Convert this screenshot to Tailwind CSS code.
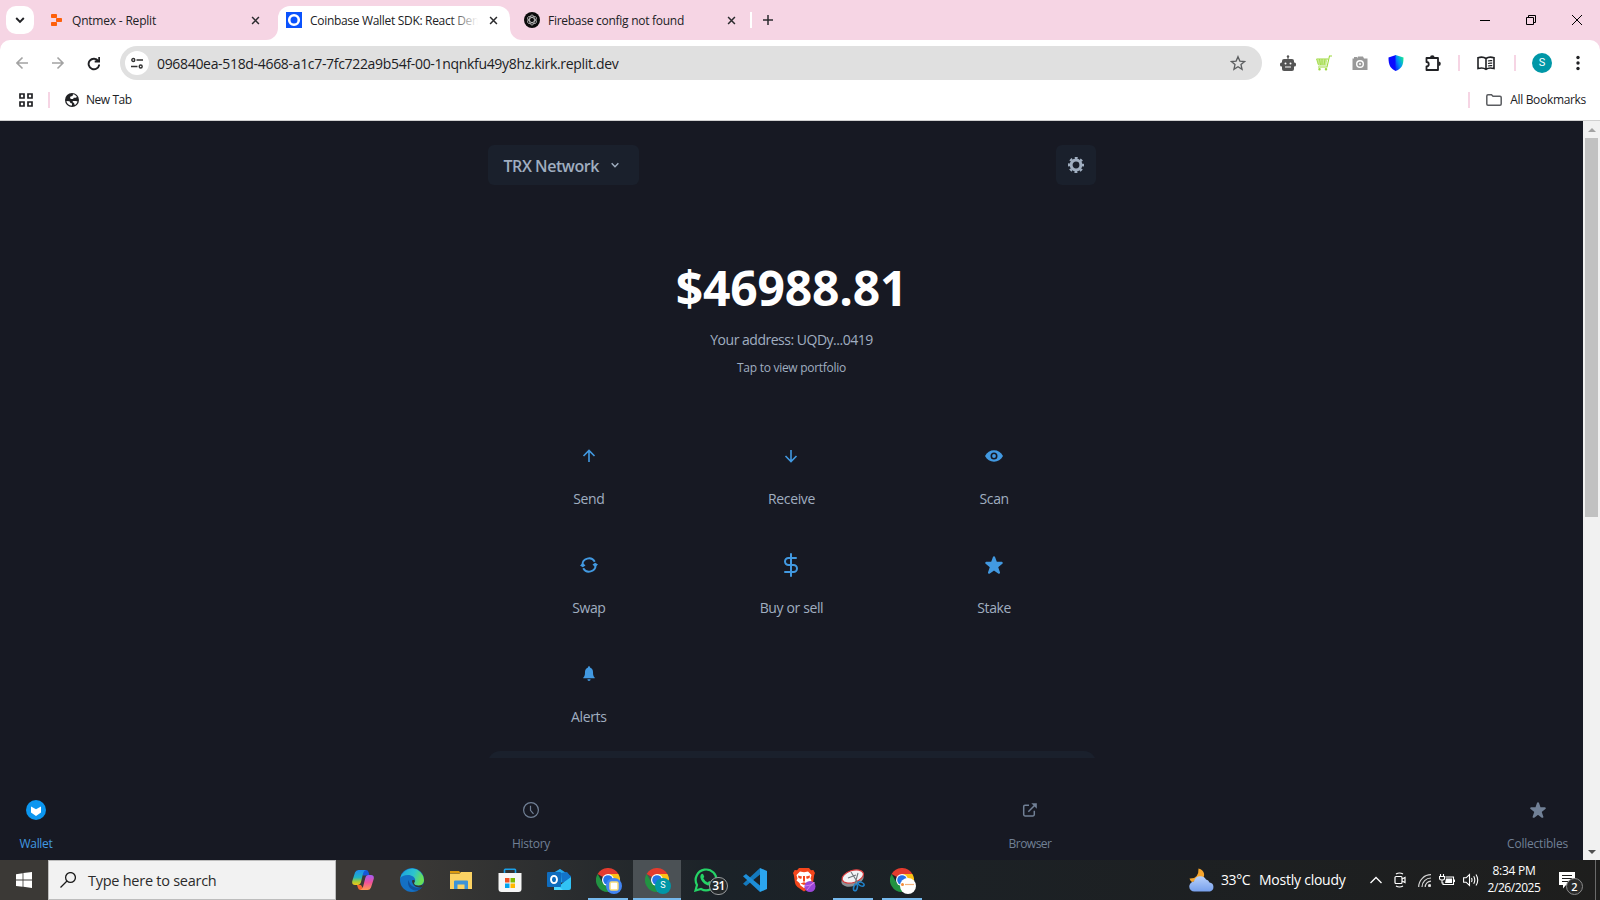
<!DOCTYPE html>
<html lang="en">
<head>
<meta charset="utf-8">
<title>Coinbase Wallet SDK: React Demo</title>
<script src="https://cdn.jsdelivr.net/npm/@tailwindcss/browser@4"></script>
</head>
<body class="h-[900px] w-[1600px] overflow-hidden bg-white font-['Open_Sans','Noto_Sans',sans-serif] text-[#202124]">
<svg class="hidden">
  <defs>
    <symbol id="close" viewBox="0 0 10 10"><path d="M1.2 1.2l7.6 7.6M8.8 1.2L1.2 8.8" stroke="#2b2b2e" stroke-width="1.7" fill="none"/></symbol>
    <symbol id="star" viewBox="0 0 24 24"><path fill="currentColor" d="M23.555 8.729a1.505 1.505 0 0 0-1.406-.98h-6.087a.5.5 0 0 1-.472-.334l-2.185-6.193a1.5 1.5 0 0 0-2.81 0l-.005.016-2.18 6.177a.5.5 0 0 1-.471.334H1.85A1.5 1.5 0 0 0 .887 10.4l5.184 4.3a.5.5 0 0 1 .155.543l-2.178 6.531a1.5 1.5 0 0 0 2.31 1.684l5.346-3.92a.5.5 0 0 1 .591 0l5.344 3.919a1.5 1.5 0 0 0 2.312-1.683l-2.178-6.535a.5.5 0 0 1 .155-.543l5.194-4.306a1.5 1.5 0 0 0 .433-1.661z"/></symbol>
    <symbol id="chrome" viewBox="0 0 24 24">
      <path fill="#e33b2e" d="M12 12L1.6 6A12 12 0 0 1 22.4 6z"/><path fill="#fbc116" d="M12 12V6h10.4A12 12 0 0 1 12 24l5.2-9z"/><path fill="#229342" d="M12 12l5.2 3L12 24A12 12 0 0 1 1.6 6l5.2 9z"/>
      <circle cx="12" cy="12" r="6" fill="#fff"/><circle cx="12" cy="12" r="4.8" fill="#2373e8"/>
    </symbol>
  </defs>
</svg>

<!-- Tab strip -->
<header class="flex h-10 bg-[#f6d5e4]">
  <div class="flex w-10 shrink-0 items-center pl-1.5">
    <div class="flex size-7 items-center justify-center rounded-[10px] bg-white">
      <svg class="size-2.5" viewBox="0 0 10 10"><path d="M1.2 3l3.8 3.8L8.8 3" fill="none" stroke="#202124" stroke-width="1.9"/></svg>
    </div>
  </div>
  <div class="flex w-[238px] shrink-0 items-center bg-white">
    <div class="flex h-10 w-[238px] items-center rounded-br-xl bg-[#f6d5e4] pr-[18px] pl-[11px]">
      <svg class="size-3 shrink-0" viewBox="0 0 12 12" fill="#fd5f0a"><rect x="0" y="0" width="6" height="4" rx=".8"/><rect x="5" y="4" width="6" height="4" rx=".8"/><rect x="0" y="8" width="6" height="4" rx=".8"/></svg>
      <span class="ml-[9px] flex-1 pt-0.5 text-xs tracking-[-0.2px] whitespace-nowrap">Qntmex - Replit</span>
      <svg class="size-[9px]"><use href="#close"/></svg>
    </div>
  </div>
  <div class="flex w-[232px] shrink-0 pt-1.5">
    <div class="flex h-[34px] w-full items-center rounded-t-xl bg-white pr-[12px] pb-[6px] pl-2">
      <svg class="size-4 shrink-0" viewBox="0 0 16 16"><path fill="#0a52fd" d="M0 0h16v16H0z"/><circle cx="8" cy="8" r="4.8" fill="none" stroke="#fff" stroke-width="2.6"/><rect x="6.5" y="6.5" width="3" height="3" rx=".5" fill="#0a52fd"/></svg>
      <div class="relative ml-2 w-[168px] overflow-hidden pt-0.5 text-xs tracking-[-0.31px] whitespace-nowrap">Coinbase Wallet SDK: React Demo
        <div class="absolute inset-y-0 right-0 w-7 bg-linear-to-r from-white/0 to-white"></div>
      </div>
      <svg class="ml-auto size-[9px]"><use href="#close"/></svg>
    </div>
  </div>
  <div class="flex flex-1 bg-white">
    <div class="flex flex-1 items-center rounded-bl-xl bg-[#f6d5e4] pl-[14px]">
      <svg class="size-4 shrink-0" viewBox="0 0 16 16"><circle cx="8" cy="8" r="8" fill="#0b0b0b"/><g fill="none" stroke="#c9c9c9" stroke-width=".8"><ellipse cx="8" cy="8" rx="2.4" ry="5"/><ellipse cx="8" cy="8" rx="2.4" ry="5" transform="rotate(60 8 8)"/><ellipse cx="8" cy="8" rx="2.4" ry="5" transform="rotate(120 8 8)"/></g></svg>
      <span class="ml-2 w-[179px] pt-0.5 text-xs tracking-[-0.27px] whitespace-nowrap">Firebase config not found</span>
      <svg class="size-[9px]"><use href="#close"/></svg>
      <i class="ml-[14px] h-4 w-0.5 bg-white"></i>
      <svg class="ml-[11px] size-[10px]" viewBox="0 0 10 10"><path d="M5 0v10M0 5h10" stroke="#2b2b2e" stroke-width="1.5"/></svg>
      <svg class="ml-auto h-2.5 w-[102px] mr-[18px]" viewBox="0 0 102 10" fill="none" stroke="#000" stroke-width="1"><path d="M0 5.5h10M46.500 2.500h7v7h-7zM48.500 2.500v-2h7v7h-2M92 0l10 10M102 0l-10 10"/></svg>
    </div>
  </div>
</header>

<!-- Address bar -->
<div class="bg-[#f6d5e4]">
<div class="flex h-[41px] items-center rounded-t-[10px] bg-white pt-[5px]">
  <svg class="ml-4 h-4 w-[84px] shrink-0" viewBox="0 0 84 16" fill="none" stroke-width="1.6"><path stroke="#a3a3a3" d="M12 8H1M6.500 2.500L1 8l5.500 5.500M36 8h11M41.500 2.500L47 8l-5.500 5.500"/><path stroke="#202124" stroke-width="1.9" d="M82.300 6A5.300 5.300 0 1 0 83.200 9.500M83.200 2v4.500h-4.500"/></svg>
  <div class="ml-5 flex h-[34px] w-[1142px] shrink-0 items-center rounded-full bg-[#e0e0e0] pl-[5px]">
    <div class="flex size-6 items-center justify-center rounded-full bg-white">
      <svg class="size-3" viewBox="0 0 12 12" fill="none" stroke="#333" stroke-width="1.4"><circle cx="2.300" cy="3" r="1.500"/><path d="M5.500 3H12M0 9.500h6.500"/><circle cx="9.700" cy="9.500" r="1.500"/></svg>
    </div>
    <span class="ml-2 pt-px text-sm tracking-[-0.32px] whitespace-nowrap">096840ea-518d-4668-a1c7-7fc722a9b54f-00-1nqnkfu49y8hz.kirk.replit.dev</span>
    <svg class="mr-4 ml-auto size-4" viewBox="0 0 24 24"><path d="M12 2.500l2.800 6.600 7.100.6-5.400 4.700 1.600 7L12 17.700l-6.100 3.700 1.600-7-5.400-4.700 7.100-.6z" fill="none" stroke="#5c5e60" stroke-width="2"/></svg>
  </div>
  <svg class="ml-[18px] size-4 shrink-0" viewBox="0 0 16 16" fill="#555"><circle cx="8" cy="1.500" r="1.200"/><path d="M7.500 2h1v3h-1z"/><rect x="2" y="4" width="12" height="12" rx="2"/><rect y="7.500" width="16" height="4" rx="1.500"/><g fill="#fff"><circle cx="5.500" cy="8.500" r="1"/><circle cx="10.500" cy="8.500" r="1"/><path d="M5 11.500h6v1H5z"/></g></svg>
  <svg class="ml-5 size-4 shrink-0" viewBox="0 0 16 16" fill="none" stroke="#9bd83b" stroke-width="1.100"><path fill="#e6f7c8" stroke="none" d="M.5 4h11L10.500 10H2.500z"/><path d="M16 1h-2.500L11 12H2M.5 4h11.500"/><path stroke-width=".8" d="M.5 4l2 6M3.500 4l1 6M6 4v6M9 4l-1 6M1 6h10M1.500 8h9M2.500 10h8"/><circle cx="3.500" cy="14.300" r=".7"/><circle cx="10" cy="14.300" r=".7"/></svg>
  <svg class="ml-5 size-4 shrink-0" viewBox="0 0 16 16"><path fill="#999" d="M1 3.500h1V2h3v1.500L6 1.500h5l1 2h3.500v11.500h-15V3.500z"/><circle cx="8" cy="9" r="3.300" fill="none" stroke="#fff" stroke-width="1.400"/><circle cx="8" cy="9" r="1" fill="#fff"/></svg>
  <svg class="ml-5 size-4 shrink-0" viewBox="0 0 16 16"><defs><linearGradient id="sh" x1="0" y1="0.900" x2="1" y2="0.100"><stop stop-color="#0a22ff"/><stop offset=".45" stop-color="#0090f5"/><stop offset="1" stop-color="#19f58a"/></linearGradient></defs><path fill="#0a0aff" d="M8 0v16C3 14 .5 11 .5 2.500z"/><path fill="url(#sh)" d="M7.500 0v16C13 14 15.500 11 15.500 2.500z"/></svg>
  <svg class="ml-[21px] size-4 shrink-0" viewBox="0 0 16 16"><path d="M1.500 3h11.500v12H1.500v-3.500c3 0 3-4.500 0-4.500z" fill="none" stroke="#202124" stroke-width="1.800" stroke-linejoin="round"/><path fill="#202124" d="M5 2.500a2.300 2.300 0 0 1 4.600 0zM13.500 6.500a2.300 2.300 0 0 1 0 4.600z"/></svg>
  <i class="ml-[17px] h-4 w-0.5 shrink-0 bg-[#f6d5e4]"></i>
  <svg class="ml-[17px] h-4 w-[18px] shrink-0" viewBox="0 0 18 16" fill="none" stroke="#202124" stroke-width="1.600"><path d="M9 3.500C7 2 3.500 2 1 2.700v10.800c2.500-.7 6-.7 8 .8 2-1.500 5.500-1.500 8-.8V2.700c-2.500-.7-6-.7-8 .8zM9 3.500v10.800"/><path stroke-width="1.200" d="M11 6c1.300-.5 2.700-.5 4.200-.3M11 8.500c1.300-.5 2.700-.5 4.200-.3M11 11c1.300-.5 2.700-.5 4.200-.3"/></svg>
  <i class="ml-[19px] h-4 w-0.5 shrink-0 bg-[#f6d5e4]"></i>
  <div class="ml-4 flex size-5 shrink-0 items-center justify-center rounded-full bg-[#0097a7] font-['Roboto',sans-serif] text-[11px] text-white">S</div>
  <svg class="ml-6 h-4 w-1 shrink-0" viewBox="0 0 4 16" fill="#202124"><circle cx="2" cy="2.500" r="1.700"/><circle cx="2" cy="8" r="1.700"/><circle cx="2" cy="13.500" r="1.700"/></svg>
</div>
</div>

<!-- Bookmarks bar -->
<div class="flex h-10 items-center border-b border-[#d0d0d0] bg-white pr-[14px] pb-px text-xs">
  <svg class="ml-[19px] size-[14px]" viewBox="0 0 14 14" fill="none" stroke="#202124" stroke-width="1.700"><path d="M1 1h4v4H1zM9 1h4v4H9zM1 9h4v4H1zM9 9h4v4H9z"/></svg>
  <i class="ml-[15px] h-4 w-0.5 bg-[#f6d5e4]"></i>
  <svg class="ml-[15px] size-[14px]" viewBox="0 0 14 14"><circle cx="7" cy="7" r="7" fill="#202124"/><path fill="#fff" d="M1.500 8l3 .2 1 1.800 1.500.5V12.600C4 12.600 1.600 10.600 1.500 8zM8 1.300c2 .3 3 1.200 4 2.700l-2 1-1-.5-1 1.500H6l-1-1 .5-1.500L7.500 3zM8 8h3l1.500.5c-.3 1.500-1.300 2.800-2.800 3.600L9 10 7.500 9z"/></svg>
  <span class="ml-[7px] tracking-[-0.45px]">New Tab</span>
  <i class="ml-auto h-4 w-0.5 bg-[#f6d5e4]"></i>
  <svg class="ml-4 h-3 w-4" viewBox="0 0 16 12"><path d="M.8 10V2Q.8.800 2 .800h3.500L7 2.300h7q1.200 0 1.200 1.200V10q0 1.200-1.200 1.200H2Q.8 11.200.8 10z" fill="none" stroke="#5a5c60" stroke-width="1.500"/></svg>
  <span class="ml-2 tracking-[-0.32px]">All Bookmarks</span>
</div>

<!-- Page viewport -->
<div class="flex h-[739px]">
  <div class="flex w-[1583px] flex-col bg-[#171923] text-[#a0aec0]">
    <main class="mx-auto flex h-[637px] w-[608px] flex-col overflow-hidden pt-6">
      <div class="flex items-center justify-between">
        <div class="flex h-10 w-[151px] items-center rounded-md bg-[#1a202c] pl-4">
          <span class="w-[96px] pt-px text-base font-semibold tracking-[-0.44px] whitespace-nowrap">TRX Network</span>
          <svg class="ml-[7px] size-4" viewBox="0 0 24 24"><path d="M7 9.500l5 5 5-5" fill="none" stroke="currentColor" stroke-width="2.200"/></svg>
        </div>
        <div class="flex size-10 items-center justify-center rounded-md bg-[#1a202c]">
          <svg class="size-4" viewBox="0 0 16 16" fill="none" stroke="currentColor"><circle cx="8" cy="8" r="4.900" stroke-width="3"/><circle cx="8" cy="8" r="7" stroke-width="2.200" stroke-dasharray="2.800 2.698" stroke-dashoffset="1.400"/></svg>
        </div>
      </div>
      <div class="mt-[71px] flex flex-col items-center">
        <div class="h-[64px] text-5xl leading-[64px] font-bold tracking-[-0.2px] text-white">$46988.81</div>
        <div class="mt-[9px] text-sm leading-[21px] tracking-[-0.49px]">Your address: UQDy...0419</div>
        <div class="mt-[9px] text-xs leading-[18px] tracking-[-0.28px]">Tap to view portfolio</div>
      </div>
      <div class="mt-[63px] grid h-[307px] shrink-0 grid-cols-3 grid-rows-[109px_109px_89px] text-center text-sm leading-[21px] tracking-[-0.37px]">
        <div class="flex flex-col items-center">
          <svg class="mt-1 h-6 w-6" viewBox="0 0 24 24" fill="none" stroke="#4299e1" stroke-width="1.600"><path d="M12 18V6.500M6.500 12L12 6.500l5.500 5.500"/></svg><span class="mt-5">Send</span>
        </div>
        <div class="flex flex-col items-center">
          <svg class="mt-1 h-6 w-6" viewBox="0 0 24 24" fill="none" stroke="#4299e1" stroke-width="1.600"><path d="M12 6v11.500M6.500 12l5.500 5.500 5.500-5.500"/></svg><span class="mt-5">Receive</span>
        </div>
        <div class="flex flex-col items-center">
          <svg class="mt-1 h-6 w-6" viewBox="0 0 24 24"><path fill="#4299e1" d="M3 12c2-3.800 5.200-5.700 9-5.700s7 1.900 9 5.700c-2 3.800-5.200 5.700-9 5.700S5 15.800 3 12z"/><circle cx="12" cy="12" r="2.700" fill="none" stroke="#171923" stroke-width="1.600"/></svg><span class="mt-5">Scan</span>
        </div>
        <div class="flex flex-col items-center">
          <svg class="mt-1 h-6 w-6" viewBox="0 0 24 24" fill="none" stroke="#4299e1" stroke-width="1.800"><path d="M5.300 12A6.700 6.700 0 0 1 17.800 8.700M18.700 12A6.700 6.700 0 0 1 6.200 15.300"/><path fill="#4299e1" stroke="none" d="M3 12.500l3-2.500 2.500 2.500-2.700 1.800zM21 11.500l-3 2.500-2.500-2.500 2.700-1.800z"/></svg><span class="mt-5">Swap</span>
        </div>
        <div class="flex flex-col items-center">
          <svg class="mt-1 h-6 w-6" viewBox="0 0 24 24" fill="none" stroke="#4299e1" stroke-width="2" stroke-linecap="round" stroke-linejoin="round"><path d="M12 1v22M17 5H9.500a3.500 3.500 0 0 0 0 7h5a3.500 3.500 0 0 1 0 7H6"/></svg><span class="mt-5">Buy or sell</span>
        </div>
        <div class="flex flex-col items-center text-[#a0aec0]">
          <svg class="mt-[7px] mb-[-1px] size-[18px] text-[#4299e1]"><use href="#star"/></svg><span class="mt-6">Stake</span>
        </div>
        <div class="flex flex-col items-center">
          <svg class="mt-1 h-6 w-6" viewBox="0 0 24 24" fill="#4299e1"><path d="M12 4.300c.7 0 1 .4 1 1.100 2 .6 3 2.300 3 4.600 0 3.500.5 4.300 1.700 5.500v.8H6.300v-.8C7.500 14.300 8 13.500 8 10c0-2.300 1-4 3-4.600 0-.7.300-1.100 1-1.100zM10.400 17.300h3.200a1.600 1.600 0 0 1-3.200 0z"/></svg><span class="mt-5">Alerts</span>
        </div>
      </div>
      <div class="mt-auto h-[7px] shrink-0 overflow-hidden"><div class="h-10 rounded-xl bg-[#1a202c]"></div></div>
    </main>
    <nav class="flex flex-1 justify-between pt-[42px] pr-[15px] pl-4 text-xs leading-[18px] text-[#718096]">
      <div class="flex w-10 flex-col items-center text-[#4299e1]">
        <svg class="size-5" viewBox="0 0 20 20"><circle cx="10" cy="10" r="10" fill="#0b96f0"/><path fill="#fff" d="M5 6.500l5 2.700 5-2.700v6L10 16l-5-3.500z"/></svg><span class="mt-[15px] tracking-[-0.3px]">Wallet</span>
      </div>
      <div class="flex w-[44px] flex-col items-center">
        <svg class="my-0.5 size-4" viewBox="0 0 16 16" fill="none" stroke="currentColor" stroke-width="1.200"><circle cx="8" cy="8" r="7.400"/><path d="M7.500 3.800v4.500l3 3.500"/></svg><span class="mt-[15px] tracking-[-0.29px]">History</span>
      </div>
      <div class="flex w-[48px] flex-col items-center">
        <svg class="my-0.5 size-4" viewBox="0 0 16 16" fill="none" stroke="currentColor" stroke-width="1.500"><path d="M7 3.200H3Q1.700 3.200 1.700 4.500v8Q1.700 13.900 3 13.900h8q1.300 0 1.300-1.300V8.700M6.300 9.800L13 3"/><path fill="currentColor" stroke="none" d="M9.300 1.300h5.500v5.500z"/></svg><span class="mt-[15px] tracking-[-0.5px]">Browser</span>
      </div>
      <div class="flex w-[61px] flex-col items-center">
        <svg class="my-0.5 size-4"><use href="#star"/></svg><span class="mt-[15px] tracking-[-0.21px]">Collectibles</span>
      </div>
    </nav>
  </div>
  <div class="flex w-[17px] flex-col items-center bg-[#f1f1f1]">
    <svg class="h-[17px] w-2" viewBox="0 0 8 17"><path fill="#a3a3a3" d="M0 11l4-4 4 4z"/></svg>
    <i class="h-[379px] w-[13px] bg-[#c1c1c1]"></i>
    <svg class="mt-auto h-[17px] w-2" viewBox="0 0 8 17"><path fill="#505050" d="M0 7l4 4 4-4z"/></svg>
  </div>
</div>

<!-- Taskbar -->
<footer class="flex h-10 bg-linear-to-r from-[#3b3936] from-25% via-[#1b2228] via-45% to-[#1e1e1d] to-100% text-white">
  <div class="flex w-12 shrink-0 items-center justify-center">
    <svg class="size-4" viewBox="0 0 16 16" fill="#fff"><path d="M0 2.200L6.600 1.200v6.400H0zM7.400 1.100L16 0v7.600H7.400zM0 8.400h6.600v6.400L0 13.900zM7.400 8.400H16V16l-8.600-1.200z"/></svg>
  </div>
  <div class="flex h-10 w-72 shrink-0 items-center border border-[#bdbdbd] bg-[#f2f2f2] pl-[11px] text-[#2b2b2b]">
    <svg class="size-4" viewBox="0 0 16 16" fill="none" stroke="#1a1a1a" stroke-width="1.300"><circle cx="10.500" cy="5.500" r="4.900"/><path d="M7 9L.5 15.500"/></svg>
    <span class="ml-3 pt-0.5 text-[14.5px] tracking-[-0.26px]">Type here to search</span>
  </div>
  <div class="ml-[3px] flex shrink-0 gap-px">
    <div class="flex w-12 items-center justify-center">
      <svg class="size-[22px]" viewBox="0 0 22 22"><defs><linearGradient id="ca" x2="0" y2="1"><stop stop-color="#1f8cf0"/><stop offset=".5" stop-color="#22b5c0"/><stop offset=".75" stop-color="#9ccb3b"/><stop offset="1" stop-color="#f5c518"/></linearGradient><linearGradient id="cb" x2="0" y2="1"><stop stop-color="#a35bf5"/><stop offset=".5" stop-color="#f0529a"/><stop offset="1" stop-color="#ff9a52"/></linearGradient></defs><path fill="#1558d8" d="M8 1h6q2 0 2.500 2l1 3.500H11z"/><path fill="url(#ca)" d="M6.500 1H14Q12 1.500 11.200 4L9 13q-.8 3-3.500 3H3Q-.5 16 .3 12L3 3.500Q4 1 6.500 1z"/><path fill="#f5662f" d="M5 16h4l3 5H8.500Q6.500 21 6 19z"/><path fill="url(#cb)" d="M15.500 21H8q2.300-.5 3-3l2.300-9q.8-3 3.200-3H19q3.500 0 2.700 4L19 18.500q-1 2.500-3.500 2.500z"/></svg>
    </div>
    <div class="flex w-12 items-center justify-center">
      <svg class="size-6" viewBox="0 0 24 24"><defs><linearGradient id="ed" x2="1" y2=".3"><stop stop-color="#1ba0df"/><stop offset=".6" stop-color="#2cc3cf"/><stop offset="1" stop-color="#69e058"/></linearGradient></defs><circle cx="12" cy="12" r="12" fill="#1470c4"/><path fill="url(#ed)" d="M.2 10.500A12 12 0 0 1 24 12c0 3.500-2.500 5.500-5.500 5.500-3 0-4.500-1-4.500-2s1.200-1.500 1.200-3.500C15.200 9.500 12 7 8 7S1 8.500.2 10.500z"/><path fill="#10509c" d="M8.500 12c-2 5 2 10.500 7.500 10.500 3 0 5-1.500 6-3.500-5 2-12 .5-13.500-7z"/><path fill="#33332f" d="M12 12.500c1-1 3-.5 2.800.8-.2 1-1.200 1.500-.5 2.700 1.500 2.300 6 2.300 9 0-.5 1.500-1 2.500-1.800 3.300-4.500 1-9.500-2-9.500-6.800z"/></svg>
    </div>
    <div class="flex w-12 items-center justify-center">
      <svg class="h-[18px] w-[22px]" viewBox="0 0 22 18"><path fill="#dc9a0e" d="M0 0h9l2 2.500H0z"/><path fill="#fbd263" d="M0 2.800h9.500L11 1h11v17H0z"/><path fill="#3c93d8" d="M4 10.500q0-1 1-1h12q1 0 1 1V18h-3.500v-4.500h-7V18H4z"/></svg>
    </div>
    <div class="flex w-12 items-center justify-center">
      <svg class="size-6" viewBox="0 0 24 24"><path d="M6.500 6V2q0-.7.700-.7h9.600q.7 0 .7.700v4" fill="none" stroke="#1aa0e8" stroke-width="1.600"/><path fill="#f6f6f6" d="M.5 5h23v16q0 3-3 3h-17q-3 0-3-3z"/><path fill="#f04f24" d="M7 10h4.500v4.500H7z"/><path fill="#7fba00" d="M12.500 10H17v4.500h-4.500z"/><path fill="#00a4ef" d="M7 15.500h4.500V20H7z"/><path fill="#ffb900" d="M12.500 15.500H17V20h-4.500z"/></svg>
    </div>
    <div class="flex w-12 items-center justify-center">
      <svg class="size-6" viewBox="0 0 24 24"><path fill="#0a63b8" d="M4 8l9-7 11 7v6H4z"/><path fill="#28a8ea" d="M6 5l7-4 9 6-8 8z"/><path fill="#1374c9" d="M14 5l6-1 4 5-9 6z"/><path fill="#31c3f5" d="M24 9v11q0 2-2 2H7l10-8z"/><path fill="#50d9ff" d="M7 14l9 8H7z"/><rect y="4" width="14" height="15" rx="1" fill="#0f6cbd"/><ellipse cx="7" cy="11.500" rx="3" ry="3.600" fill="none" stroke="#fff" stroke-width="1.900"/></svg>
    </div>
    <div class="relative flex w-12 items-center justify-center">
      <svg class="size-6"><use href="#chrome"/></svg>
      <svg class="absolute top-[18px] left-[22px] size-4" viewBox="0 0 16 16"><circle cx="8" cy="8" r="8" fill="#4285f4"/><rect x="4" y="4" width="8" height="8" rx="1.500" fill="#fff" stroke="#f6dc7a" stroke-width="1.500"/></svg>
      <i class="absolute bottom-0 left-1 h-0.5 w-10 bg-[#76b9ed]"></i>
    </div>
    <div class="relative flex w-12 items-center justify-center bg-[#4b5155]">
      <svg class="size-6"><use href="#chrome"/></svg>
      <div class="absolute top-[18px] left-[22px] flex size-4 items-center justify-center rounded-full bg-[#0097a7] font-['Roboto',sans-serif] text-[9px]">S</div>
      <i class="absolute bottom-0 left-0 h-0.5 w-12 bg-[#76b9ed]"></i>
    </div>
    <div class="relative flex w-12 items-center justify-center">
      <svg class="size-6" viewBox="0 0 24 24"><path d="M1.500 22.500L3 17a10.400 10.400 0 1 1 4 4z" fill="none" stroke="#25d366" stroke-width="2.200"/><path fill="#25d366" d="M7 6.500q1.500-1.500 2.300 0l.9 2q.2.600-.9 1.800 1.500 3 4.500 4.300l1.300-1.500 2.800 1.400c.3 2-1.500 3-3 3C11 17.300 6.500 12.500 6.300 9q0-1.500.7-2.500z"/></svg>
      <div class="absolute top-[17px] left-[27px] flex h-[18px] w-[19px] items-center justify-center rounded-full border border-[#9a9d9f] bg-[#24282a] text-xs leading-none font-semibold tracking-[-0.6px]">31</div>
    </div>
    <div class="flex w-12 items-center justify-center">
      <svg class="size-6" viewBox="0 0 24 24"><path fill="#1479bd" d="M17 0v6.500L3 18 0 15.700z"/><path fill="#1d8ed8" d="M0 8.300L3 6l14 11.500V24z"/><path fill="#2ba6ef" d="M17 0l7 3v18l-7 3z"/></svg>
    </div>
    <div class="flex w-12 items-center justify-center">
      <svg class="size-6" viewBox="0 0 24 24"><path fill="#f4461c" d="M7 0h10l2 2.200 2.300-.3L23 5l-.8 2L21 15q-.5 2.500-2.500 4L12 23.500 5.500 19Q3.500 17.500 3 15L1.800 7 1 5l1.700-3.100L5 2.200z"/><path fill="#fff" d="M8 3.500l4 .8 4-.8L19.500 7l-1 3.500 1 2-3 2.500-1 2.500-3.500 2.500-3.500-2.500-1-2.500-3-2.500 1-2-1-3.500z"/><path fill="#f4461c" d="M6 7.500l4 1-.8 2.500L6.500 10zM18 7.500l-4 1 .8 2.500 2.700-1zM11 8h2v5l-1 1-1-1zM8.500 15.500l3.500-1.300 3.500 1.300L12 17z"/><circle cx="18" cy="18.500" r="5.500" fill="#9a46d8"/><path d="M13 18q5 0 10-3.500M15 22q3-4 7-8" stroke="#e88cf0" stroke-width=".7" fill="none"/></svg>
    </div>
    <div class="relative flex w-12 items-center justify-center">
      <svg class="size-6" viewBox="0 0 24 24"><ellipse cx="11.500" cy="11.500" rx="11.500" ry="6.500" transform="rotate(-18 11.500 11.500)" fill="#8b8f94"/><ellipse cx="11.800" cy="8.500" rx="11" ry="6" transform="rotate(-18 11.800 8.500)" fill="#f2f4f6" stroke="#d8393b" stroke-width="1.200"/><path d="M10 4l7 11M17 5l-3 11M7 10l8-3" stroke="#6f767c" stroke-width="1.100"/><g fill="none" stroke="#1f80c8" stroke-width="1.600"><ellipse cx="14.500" cy="19.500" rx="1.800" ry="3.300" transform="rotate(15 14.500 19.500)"/><ellipse cx="20" cy="16" rx="3.300" ry="1.800" transform="rotate(25 20 16)"/></g></svg>
      <i class="absolute bottom-0 left-1 h-0.5 w-10 bg-[#76b9ed]"></i>
    </div>
    <div class="relative flex w-12 items-center justify-center">
      <svg class="size-6"><use href="#chrome"/></svg>
      <svg class="absolute top-[18px] left-[22px] size-4" viewBox="0 0 16 16"><circle cx="8" cy="8" r="8" fill="#fff"/><circle cx="2.500" cy="6.500" r="1.500" fill="#f28c38"/><path d="M5 6.500h9" stroke="#f3b37c" stroke-width="1.200"/></svg>
      <i class="absolute bottom-0 left-1 h-0.5 w-10 bg-[#76b9ed]"></i>
    </div>
  </div>
  <div class="ml-auto flex items-center">
    <svg class="h-6 w-[26px]" viewBox="0 0 26 24"><path fill="#f6a52c" d="M9.500.5C16 2 17 9 12 12.500L3 14Q1 12.500.5 10.500 10 11 9.500.5z"/><defs><linearGradient id="cl" x2="0" y2="1"><stop stop-color="#b7d0fb"/><stop offset="1" stop-color="#77a0ec"/></linearGradient></defs><path fill="url(#cl)" d="M5.500 23.500a5 5 0 0 1-.5-10 6.500 6.500 0 0 1 12-2 4.500 4.500 0 0 1 3.500 3 4.600 4.600 0 0 1 .5 9z"/></svg>
    <span class="ml-[6px] w-[38px] text-sm tracking-[-0.4px]">33°C</span>
    <span class="w-[88px] text-sm tracking-[-0.24px] whitespace-nowrap">Mostly cloudy</span>
    <svg class="ml-[23px] h-2 w-3" viewBox="0 0 12 8"><path d="M.5 7L6 1.500 11.500 7" fill="none" stroke="#fff" stroke-width="1.300"/></svg>
    <svg class="ml-3 h-4 w-3" viewBox="0 0 12 16" fill="none" stroke="#fff" stroke-width="1.200"><rect x="1" y="4.500" width="7" height="7" rx="1"/><path d="M8 7l3-1.500v5L8 9M2 2q3.500-2 7 0M2 14q3.500 2 7 0"/></svg>
    <svg class="ml-3 size-[13px]" viewBox="0 0 13 13" fill="none" stroke="#d5d5d5" stroke-width="1.200"><path d="M.7 13A12.300 12.300 0 0 1 13 .7M4 13a9 9 0 0 1 9-9M7.200 13A5.800 5.800 0 0 1 13 7.200"/><circle cx="11.500" cy="11.500" r="1" fill="#fff"/></svg>
    <svg class="ml-2 h-3 w-4" viewBox="0 0 16 12" fill="none" stroke="#fff" stroke-width="1.100"><path d="M6.500 3h8v7.500H4V8.500M15.500 5.500v2.500M1.500 0v2.500M4.500 0v2.500M.5 2.500h5v2Q5.500 6 3 6 .5 6 .5 4.500zM3 6v3.500"/><path fill="#fff" stroke="none" d="M7 4.500h6v4.500H6z"/></svg>
    <svg class="ml-2 h-[14px] w-4" viewBox="0 0 16 14" fill="none" stroke="#fff" stroke-width="1.100"><path d="M.6 4.800h2.500L6.500 1.500v11L3.100 9.200H.6zM8.500 5q1 2 0 4M10.700 3.300q2.200 3.700 0 7.400M13 1.500q3.500 5.500 0 11"/></svg>
    <div class="ml-[8px] flex w-[54px] flex-col items-center pb-0.5 text-xs leading-[17.5px]"><span class="tracking-[-0.27px] whitespace-nowrap">8:34 PM</span><span class="tracking-[-0.43px]">2/26/2025</span></div>
    <div class="relative ml-[18px] h-10 w-7">
      <svg class="mt-3 h-[17px] w-4" viewBox="0 0 16 17"><path fill="#fff" d="M0 0h16v13H7l-3 3.500V13H0z"/><path stroke="#1e1e1d" stroke-width="1.100" d="M3 3.500h10M3 6.500h10M3 9.500h6"/></svg>
      <div class="absolute top-[18px] left-[7px] flex size-[17px] items-center justify-center rounded-full border border-[#8a8a8a] bg-[#2a2a2a] text-[11px] leading-none font-semibold">2</div>
    </div>
    <i class="mr-1 ml-2 h-10 w-px bg-[#6a6a6a]"></i>
  </div>
</footer>
</body>
</html>
